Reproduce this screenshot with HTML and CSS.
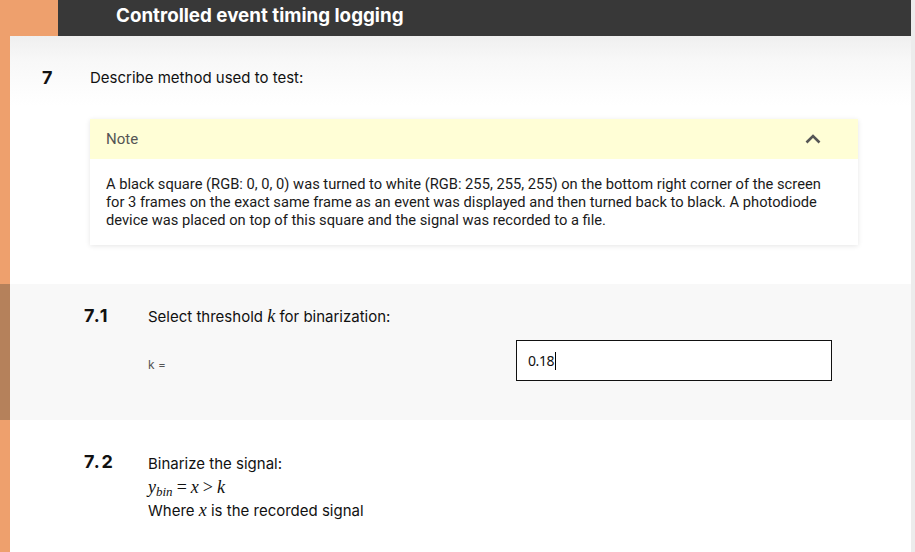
FILE: index.html
```html
<!DOCTYPE html>
<html lang="en">
<head>
<meta charset="utf-8">
<title>Controlled event timing logging</title>
<link rel="stylesheet" href="styles.css">
</head>
<body>
<div class="page">
  <header class="topbar">
    <div class="accent"></div>
    <h1 class="title">Controlled event timing logging</h1>
  </header>

  <section class="row question">
    <div class="qhead">
      <span class="num">7</span>
      <span class="qtext">Describe method used to test:</span>
    </div>
    <div class="note">
      <div class="note-head">
        <span class="note-title">Note</span>
        <svg class="chev" width="24" height="24" viewBox="0 0 24 24" aria-hidden="true">
          <path d="M5.5 15.5 L12 9 L18.5 15.5" fill="none" stroke="#555" stroke-width="2.6"/>
        </svg>
      </div>
      <div class="note-body">A black square (RGB: 0, 0, 0) was turned to white (RGB: 255, 255, 255) on the bottom right corner of the screen for 3 frames on the exact same frame as an event was displayed and then turned back to black. A photodiode device was placed on top of this square and the signal was recorded to a file.</div>
    </div>
  </section>

  <section class="row sub active">
    <div class="num">7.1</div>
    <div class="sub-body">
      <p class="qtext">Select threshold <i class="m">k</i> for binarization:</p>
      <div class="field">
        <span class="label">k =</span>
        <div class="input">0.18<span class="caret"></span></div>
      </div>
    </div>
  </section>

  <section class="row sub last">
    <div class="num">7.2</div>
    <div class="sub-body tall">
      <p class="qtext">Binarize the signal:</p>
      <p class="math"><i>y</i><sub>bin</sub><span class="op">=</span><i>x</i><span class="op">&gt;</span><i>k</i></p>
      <p class="qtext">Where <i class="m">x</i> is the recorded signal</p>
    </div>
  </section>
</div>
</body>
</html>
```

FILE: styles.css
```css
html, body {
  margin: 0;
  padding: 0;
}
body {
  background: #ececec;
  font-family: Inter, "Liberation Sans", sans-serif;
  color: #111;
}
.page {
  width: 911px;
  min-height: 552px;
  background: #ffffff;
  display: flex;
  flex-direction: column;
}
.topbar {
  display: flex;
  height: 36px;
}
.accent {
  width: 58px;
  background: #eea06d;
}
.title {
  flex: 1;
  margin: 0;
  background: #383838;
  color: #fff;
  font-family: Inter, "Liberation Sans", sans-serif;
  font-weight: 700;
  font-size: 18.8px;
  line-height: 31px;
  padding-left: 58px;
}
.row {
  border-left: 10px solid #eea06d;
  background: #fff;
}
.row.active {
  border-left-color: #b5815b;
  background: #f8f8f8;
}
.row.last {
  flex: 1;
}
.question {
  padding: 32px 0 39px 32px;
  background: linear-gradient(#efefef 0px, #f8f8f8 25px, #ffffff 70px);
}
.qhead {
  display: flex;
  align-items: center;
}
.num {
  font-weight: 700;
  font-size: 18px;
  line-height: 20px;
  letter-spacing: 1.6px;
  color: #111;
}
.qhead .num {
  width: 48px;
}
.qtext {
  margin: 0;
  font-size: 15px;
  line-height: 20px;
  color: #111;
}
.m {
  font-family: "Liberation Serif", serif;
  font-size: 18px;
}
.note {
  margin: 31px 0 0 48px;
  width: 768px;
  background: #fff;
  box-shadow: 0 1px 5px rgba(0, 0, 0, 0.10);
}
.note-head {
  height: 40px;
  background: #fffed6;
  display: flex;
  align-items: center;
  justify-content: space-between;
  padding: 0 33px 0 16px;
}
.note-title {
  font-family: Roboto, sans-serif;
  font-size: 15px;
  color: #555;
}
.chev {
  display: block;
}
.note-body {
  padding: 16px 24px 16px 16px;
  font-family: Roboto, sans-serif;
  font-size: 14.7px;
  line-height: 18px;
  color: #1a1a1a;
}
.sub {
  display: flex;
  padding: 22px 0 39px 74px;
}
.sub .num {
  width: 64px;
  flex: none;
}
.sub.last {
  padding-top: 32px;
}
.sub-body {
  display: flex;
  flex-direction: column;
}
.sub-body.tall .qtext {
  line-height: 23.5px;
}
.field {
  display: grid;
  grid-template-columns: 368px 316px;
  align-items: center;
  margin-top: 13px;
}
.label {
  font-size: 12px;
  color: #555;
  padding-top: 7px;
}
.input {
  box-sizing: border-box;
  height: 41px;
  border: 1px solid #111;
  background: #fff;
  font-family: "Noto Sans", sans-serif;
  font-size: 14px;
  letter-spacing: -0.4px;
  color: #111;
  display: flex;
  align-items: center;
  padding-left: 11px;
}
.caret {
  display: inline-block;
  width: 1px;
  height: 18px;
  background: #000;
  margin-left: 1px;
}
.math {
  margin: 0;
  font-family: "Liberation Serif", serif;
  font-size: 18px;
  line-height: 23.5px;
  color: #111;
}
.math sub {
  font-size: 13px;
  font-style: italic;
  vertical-align: -3px;
  line-height: 0;
}
.math .op {
  margin: 0 4px;
}
```
